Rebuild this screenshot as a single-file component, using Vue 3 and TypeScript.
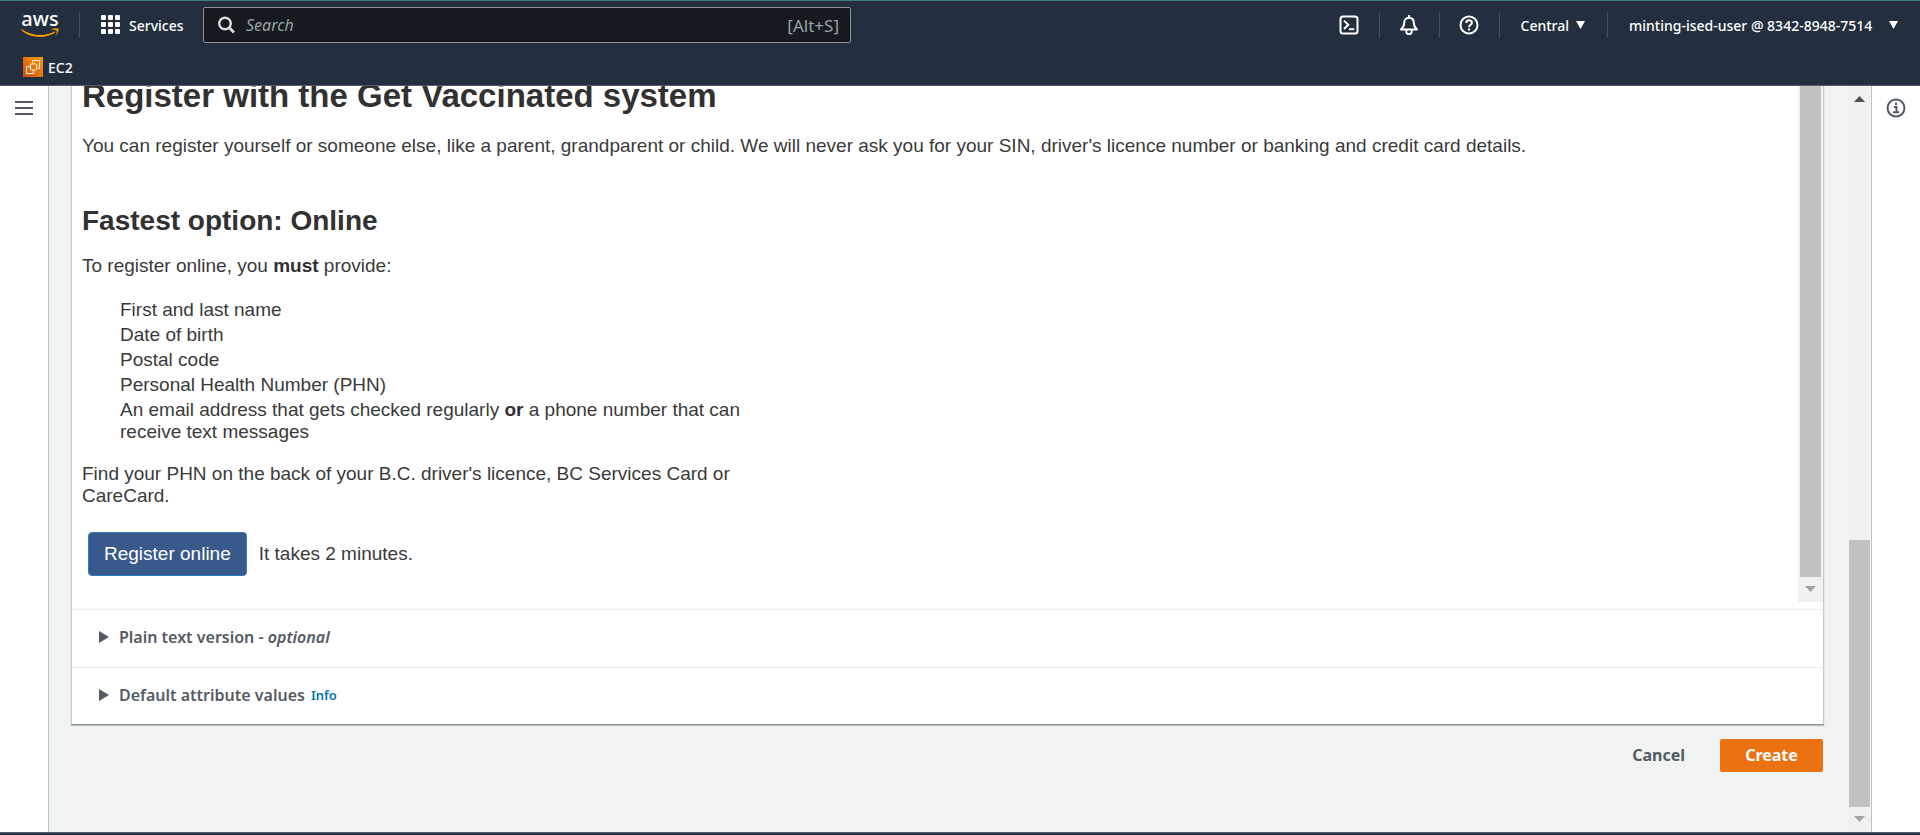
<script setup lang="ts">
import { ref } from 'vue'

interface Section {
  title: string
  note?: string
  info?: boolean
}

const query = ref('')
const requirements: string[] = [
  'First and last name',
  'Date of birth',
  'Postal code',
  'Personal Health Number (PHN)',
]
const sections: Section[] = [
  { title: 'Plain text version - ', note: 'optional' },
  { title: 'Default attribute values', info: true },
]
const gridCells = [0, 7, 14]
</script>

<template>
  <div class="shell">
    <header class="topbar">
      <div class="bar">
        <a class="logo" href="#" aria-label="AWS home">
          <span class="logo-text">aws</span>
          <svg class="smile" width="38" height="10" viewBox="0 0 38 10" aria-hidden="true">
            <path d="M0.5 1 C10 8 24 9 33.5 3.6 L34.2 4.8 C24 11 9 10.500 0 1.800 Z" fill="#f90" />
            <path d="M29.500 1.600 C32 0 36 -0.100 37.500 0.700 C38 2.500 36.800 5.800 34.500 7.600 C35.400 5.400 36 3.300 35.600 2.500 C34.500 1.700 32 1.500 29.500 1.600 Z" fill="#f90" />
          </svg>
        </a>
        <span class="rule"></span>
        <button class="services" type="button">
          <svg width="20" height="20" viewBox="0 0 20 20" fill="#fff" aria-hidden="true">
            <template v-for="y in gridCells" :key="y">
              <rect v-for="x in gridCells" :key="x" :x="x" :y="y" width="5" height="5" rx="1" />
            </template>
          </svg>
          <span>Services</span>
        </button>
        <label class="search">
          <svg width="18" height="18" viewBox="0 0 18 18" fill="none" stroke="#d5dbdb" aria-hidden="true">
            <circle cx="7" cy="7.500" r="5.800" stroke-width="2.400" />
            <path d="M11.300 11.800 L16 16.400" stroke-width="2.800" />
          </svg>
          <input v-model="query" type="text" placeholder="Search" aria-label="Search" />
          <span class="hint">[Alt+S]</span>
        </label>
        <nav class="tools">
          <button class="tool" type="button" aria-label="CloudShell">
            <svg width="20" height="20" viewBox="0 0 20 20" fill="none" stroke="#fff" stroke-width="2">
              <rect x="1.500" y="1.500" width="17" height="17" rx="2.500" />
              <path d="M5 5.600 L9.300 9.800 L5 14" />
              <path d="M10 14.200 H15.200" />
            </svg>
          </button>
          <button class="tool" type="button" aria-label="Notifications">
            <svg width="20" height="20" viewBox="0 0 20 20" fill="none" stroke="#fff" stroke-width="2">
              <path d="M10 0 V3" />
              <path d="M2 14.400 C4.400 12.300 5.200 10.600 5.200 7.800 C5.200 4.600 7.200 2.800 10 2.800 C12.800 2.800 14.800 4.600 14.800 7.800 C14.800 10.600 15.600 12.300 18 14.400 Z" stroke-linejoin="round" />
              <path d="M7.300 15 V16.400 C7.300 18 8.400 19 10 19 C11.600 19 12.700 18 12.700 16.400 V15" />
            </svg>
          </button>
          <button class="tool" type="button" aria-label="Help">
            <svg width="20" height="20" viewBox="0 0 20 20" fill="none" stroke="#fff" stroke-width="2">
              <circle cx="10" cy="10" r="8.500" />
              <path d="M7.200 8 C7.200 6.200 8.400 5.200 10 5.200 C11.700 5.200 12.900 6.200 12.900 7.700 C12.900 9.800 10 9.700 10 12.300" />
              <path d="M10 13.500 V15.500" />
            </svg>
          </button>
          <button class="menu region" type="button">
            <span>Central</span>
            <svg width="9" height="8" viewBox="0 0 9 8" fill="#fff" aria-hidden="true"><path d="M0 0 H9 L4.500 8 Z" /></svg>
          </button>
          <button class="menu account" type="button">
            <span>minting-ised-user @ 8342-8948-7514</span>
            <svg width="9" height="8" viewBox="0 0 9 8" fill="#fff" aria-hidden="true"><path d="M0 0 H9 L4.500 8 Z" /></svg>
          </button>
        </nav>
      </div>
      <div class="favorites">
        <a class="favorite" href="#">
          <svg width="20" height="20" viewBox="0 0 20 20" fill="none" aria-hidden="true">
            <defs>
              <linearGradient id="ec2" x1="0" y1="1" x2="1" y2="0">
                <stop offset="0" stop-color="#c8511b" />
                <stop offset="1" stop-color="#f90" />
              </linearGradient>
            </defs>
            <rect width="20" height="20" fill="url(#ec2)" />
            <g stroke="#fff" stroke-opacity="0.850">
              <rect x="7.500" y="7" width="6" height="6" rx="1" />
              <path d="M9.500 7 V5.500 M11.500 7 V5.500 M9.500 13 V14.500 M11.500 13 V14.500 M7.500 9 H6 M7.500 11 H6 M13.500 9 H15 M13.500 11 H15" stroke-width="0.600" />
              <path d="M9.500 5.500 V3.500 H16.500 V11.500 H15" />
              <path d="M6 9.500 H3.500 V16.500 H10.500 V14.500" />
            </g>
          </svg>
          <span>EC2</span>
        </a>
      </div>
    </header>

    <div class="body">
      <aside class="rail left">
        <button class="icon" type="button" aria-label="Open navigation">
          <svg width="18" height="16" viewBox="0 0 18 16" stroke="#545b64" stroke-width="2">
            <path d="M0 2 H18 M0 8 H18 M0 14 H18" />
          </svg>
        </button>
      </aside>

      <main class="content">
        <section class="card">
          <div class="preview">
            <div class="document">
              <h1>Register with the Get Vaccinated system</h1>
              <p class="intro">
                You can register yourself or someone else, like a parent, grandparent or child. We will never ask you
                for your SIN, driver's licence number or banking and credit card details.
              </p>
              <h2>Fastest option: Online</h2>
              <div class="column">
                <p>To register online, you <strong>must</strong> provide:</p>
                <ul>
                  <li v-for="item in requirements" :key="item">{{ item }}</li>
                  <li>
                    An email address that gets checked regularly <strong>or</strong> a phone number that can receive
                    text messages
                  </li>
                </ul>
                <p>Find your PHN on the back of your B.C. driver's licence, BC Services Card or CareCard.</p>
                <div class="cta">
                  <button class="register" type="button">Register online</button>
                  <span>It takes 2 minutes.</span>
                </div>
              </div>
            </div>
            <div class="scrollbar inner">
              <div class="thumb"></div>
              <svg class="down" width="11" height="6" viewBox="0 0 11 6" fill="#a3a3a3"><path d="M0 0 H11 L5.500 6 Z" /></svg>
            </div>
          </div>
          <div v-for="section in sections" :key="section.title" class="expander">
            <button class="toggle" type="button" aria-expanded="false">
              <svg width="10" height="12" viewBox="0 0 10 12" fill="#545b64" aria-hidden="true"><path d="M0 0 L10 6 L0 12 Z" /></svg>
              <span>{{ section.title }}<em v-if="section.note">{{ section.note }}</em></span>
            </button>
            <a v-if="section.info" class="info" href="#">Info</a>
          </div>
        </section>
        <div class="actions">
          <button class="cancel" type="button">Cancel</button>
          <button class="create" type="button">Create</button>
        </div>
      </main>

      <div class="scrollbar outer">
        <svg class="up" width="11" height="6" viewBox="0 0 11 6" fill="#505050"><path d="M0 6 H11 L5.500 0 Z" /></svg>
        <div class="track"></div>
        <div class="thumb"></div>
        <svg class="down" width="11" height="6" viewBox="0 0 11 6" fill="#a3a3a3"><path d="M0 0 H11 L5.500 6 Z" /></svg>
      </div>

      <aside class="rail right">
        <button class="icon" type="button" aria-label="Open help panel">
          <svg width="20" height="20" viewBox="0 0 20 20" fill="none" stroke="#545b64" stroke-width="2">
            <circle cx="10" cy="10" r="8.500" />
            <path d="M10 4.500 V7 M8 9 H10.500 V14 M7 14.200 H13" />
          </svg>
        </button>
      </aside>
    </div>

    <footer class="footer"></footer>
  </div>
</template>

<style>
body {
  margin: 0;
}
</style>

<style scoped>
.shell {
  display: flex;
  flex-direction: column;
  height: 100vh;
  overflow: hidden;
  background: #fff;
  color: #545b64;
  font-family: 'Noto Sans', 'Open Sans', sans-serif;
  font-size: 16px;
}

.shell *,
.shell *::before {
  box-sizing: border-box;
}

button {
  margin: 0;
  padding: 0;
  border: 0;
  background: none;
  color: inherit;
  font: inherit;
  cursor: pointer;
}

a {
  color: inherit;
  text-decoration: none;
}

svg {
  display: block;
  flex: none;
}

.topbar {
  flex: none;
  border-top: 1px solid #3a8288;
  border-bottom: 1px solid #545b6e;
  background: #232f3e;
  color: #fff;
  font-size: 14px;
  font-weight: 500;
}

.bar {
  display: flex;
  align-items: center;
  height: 48px;
  padding-left: 21px;
}

.logo {
  display: flex;
  flex-direction: column;
  align-items: center;
  width: 38px;
}

.logo-text {
  height: 15px;
  font-size: 20px;
  line-height: 12px;
}

.rule {
  width: 1px;
  height: 26px;
  margin: 0 21px 0 20px;
  background: #414d5c;
}

.services {
  display: flex;
  align-items: center;
  gap: 8px;
  width: 102px;
}

.search {
  display: flex;
  flex: 0 1 648px;
  align-items: center;
  height: 36px;
  min-width: 200px;
  padding: 0 11px 0 14px;
  border: 1px solid #879596;
  border-radius: 2px;
  background: #16191f;
  color: #95a5a6;
}

.search input {
  flex: 1;
  min-width: 0;
  height: 32px;
  padding: 0 0 0 10px;
  border: 0;
  outline: 0;
  background: transparent;
  color: #fff;
  font: 16px 'Noto Sans', 'Open Sans', sans-serif;
}

.search input::placeholder {
  color: #95a5a6;
  font-style: italic;
  opacity: 1;
}

.hint {
  font-size: 17px;
  font-weight: 400;
}

.tools {
  display: flex;
  align-items: center;
  margin-left: auto;
}

.tool,
.menu {
  display: flex;
  flex: none;
  align-items: center;
  height: 26px;
  border-right: 1px solid #414d5c;
  white-space: nowrap;
}

.tool {
  justify-content: center;
  width: 60px;
}

.menu {
  justify-content: space-between;
  gap: 7px;
  padding: 0 22px 0 21px;
}

.region {
  min-width: 108px;
}

.account {
  min-width: 312px;
  border-right: 0;
}

.favorites {
  display: flex;
  align-items: center;
  height: 36px;
  padding-left: 23px;
}

.favorite {
  display: flex;
  align-items: center;
  gap: 5px;
}

.body {
  display: flex;
  flex: 1;
  min-height: 0;
}

.rail {
  display: flex;
  flex: none;
  justify-content: center;
  align-items: flex-start;
  width: 49px;
  padding-top: 12px;
}

.rail.left {
  border-right: 1px solid #bcc4c8;
}

.rail.right {
  border-left: 1px solid #bcc4c8;
}

.icon {
  display: flex;
  align-items: center;
  height: 20px;
}

.content {
  display: flex;
  flex: 1;
  flex-direction: column;
  min-width: 0;
  padding: 0 23px 60px 22px;
  background: #f1f3f3;
}

.card {
  display: flex;
  flex: 1;
  flex-direction: column;
  min-height: 0;
  border: 1px solid #c3cacb;
  border-top: 0;
  border-bottom-color: #879196;
  background: #fff;
  box-shadow: 0 1px 1px #b5bdbe;
}

.preview {
  display: flex;
  flex: 1;
  min-height: 0;
  margin-bottom: 7px;
}

/* Scrolled to its end: the heading runs out of view at the top. */
.document {
  display: flex;
  flex: 1;
  flex-direction: column;
  justify-content: flex-end;
  min-width: 0;
  overflow: hidden;
  padding: 0 10px 26px;
  color: #3a3a3a;
  font-family: 'Liberation Sans', Arial, sans-serif;
  font-size: 19px;
  line-height: 22px;
}

.document h1,
.document h2,
.document strong {
  color: #313132;
}

.document h1 {
  margin: 0 0 20px;
  font-size: 33px;
  line-height: 38px;
}

.document h2 {
  margin: 0 0 18px;
  font-size: 28px;
  line-height: 32px;
}

.document p {
  margin: 0;
}

.document .intro {
  margin-bottom: 48px;
}

.column {
  max-width: 680px;
}

.column ul {
  margin: 22px 0 20px;
  padding-left: 38px;
  list-style: none;
}

.column li + li {
  margin-top: 3px;
}

.cta {
  display: flex;
  align-items: center;
  gap: 12px;
  margin: 25px 0 0 6px;
}

.register {
  height: 44px;
  padding: 0 15px;
  border: 1px solid #2e7cbf;
  border-radius: 4px;
  background: #38598a;
  color: #fff;
}

.scrollbar {
  display: flex;
  flex: none;
  flex-direction: column;
  align-items: center;
  background: #f1f1f1;
}

.scrollbar .thumb {
  width: 21px;
  background: #c1c1c1;
}

.inner {
  width: 25px;
}

.inner .thumb {
  flex: 1;
}

.inner .down {
  margin: 9px 0 10px;
}

.outer {
  width: 24px;
}

.outer .up {
  margin: 10px 0 7px;
}

.outer .track {
  flex: 431;
}

.outer .thumb {
  flex: 267;
}

.outer .down {
  margin: 9px 0 10px;
}

.expander {
  display: flex;
  flex: none;
  align-items: center;
  gap: 6px;
  height: 58px;
  padding: 0 0 3px 27px;
  border-top: 1px solid #eaeded;
}

.expander:last-child {
  height: 57px;
}

.toggle {
  display: flex;
  align-items: center;
  gap: 10px;
  font-weight: 600;
}

.info {
  color: #0073bb;
  font-size: 13px;
  font-weight: 600;
}

.actions {
  display: flex;
  flex: none;
  justify-content: flex-end;
  gap: 15px;
  margin-top: 14px;
  padding-right: 1px;
  font-weight: 700;
}

.cancel,
.create {
  padding: 0 20px 2px;
}

.create {
  width: 103px;
  height: 33px;
  border-radius: 2px;
  background: #ec7211;
  color: #fff;
}

.footer {
  flex: none;
  height: 3px;
  border-top: 1px solid #545b6e;
  background: #232f3e;
}
</style>
